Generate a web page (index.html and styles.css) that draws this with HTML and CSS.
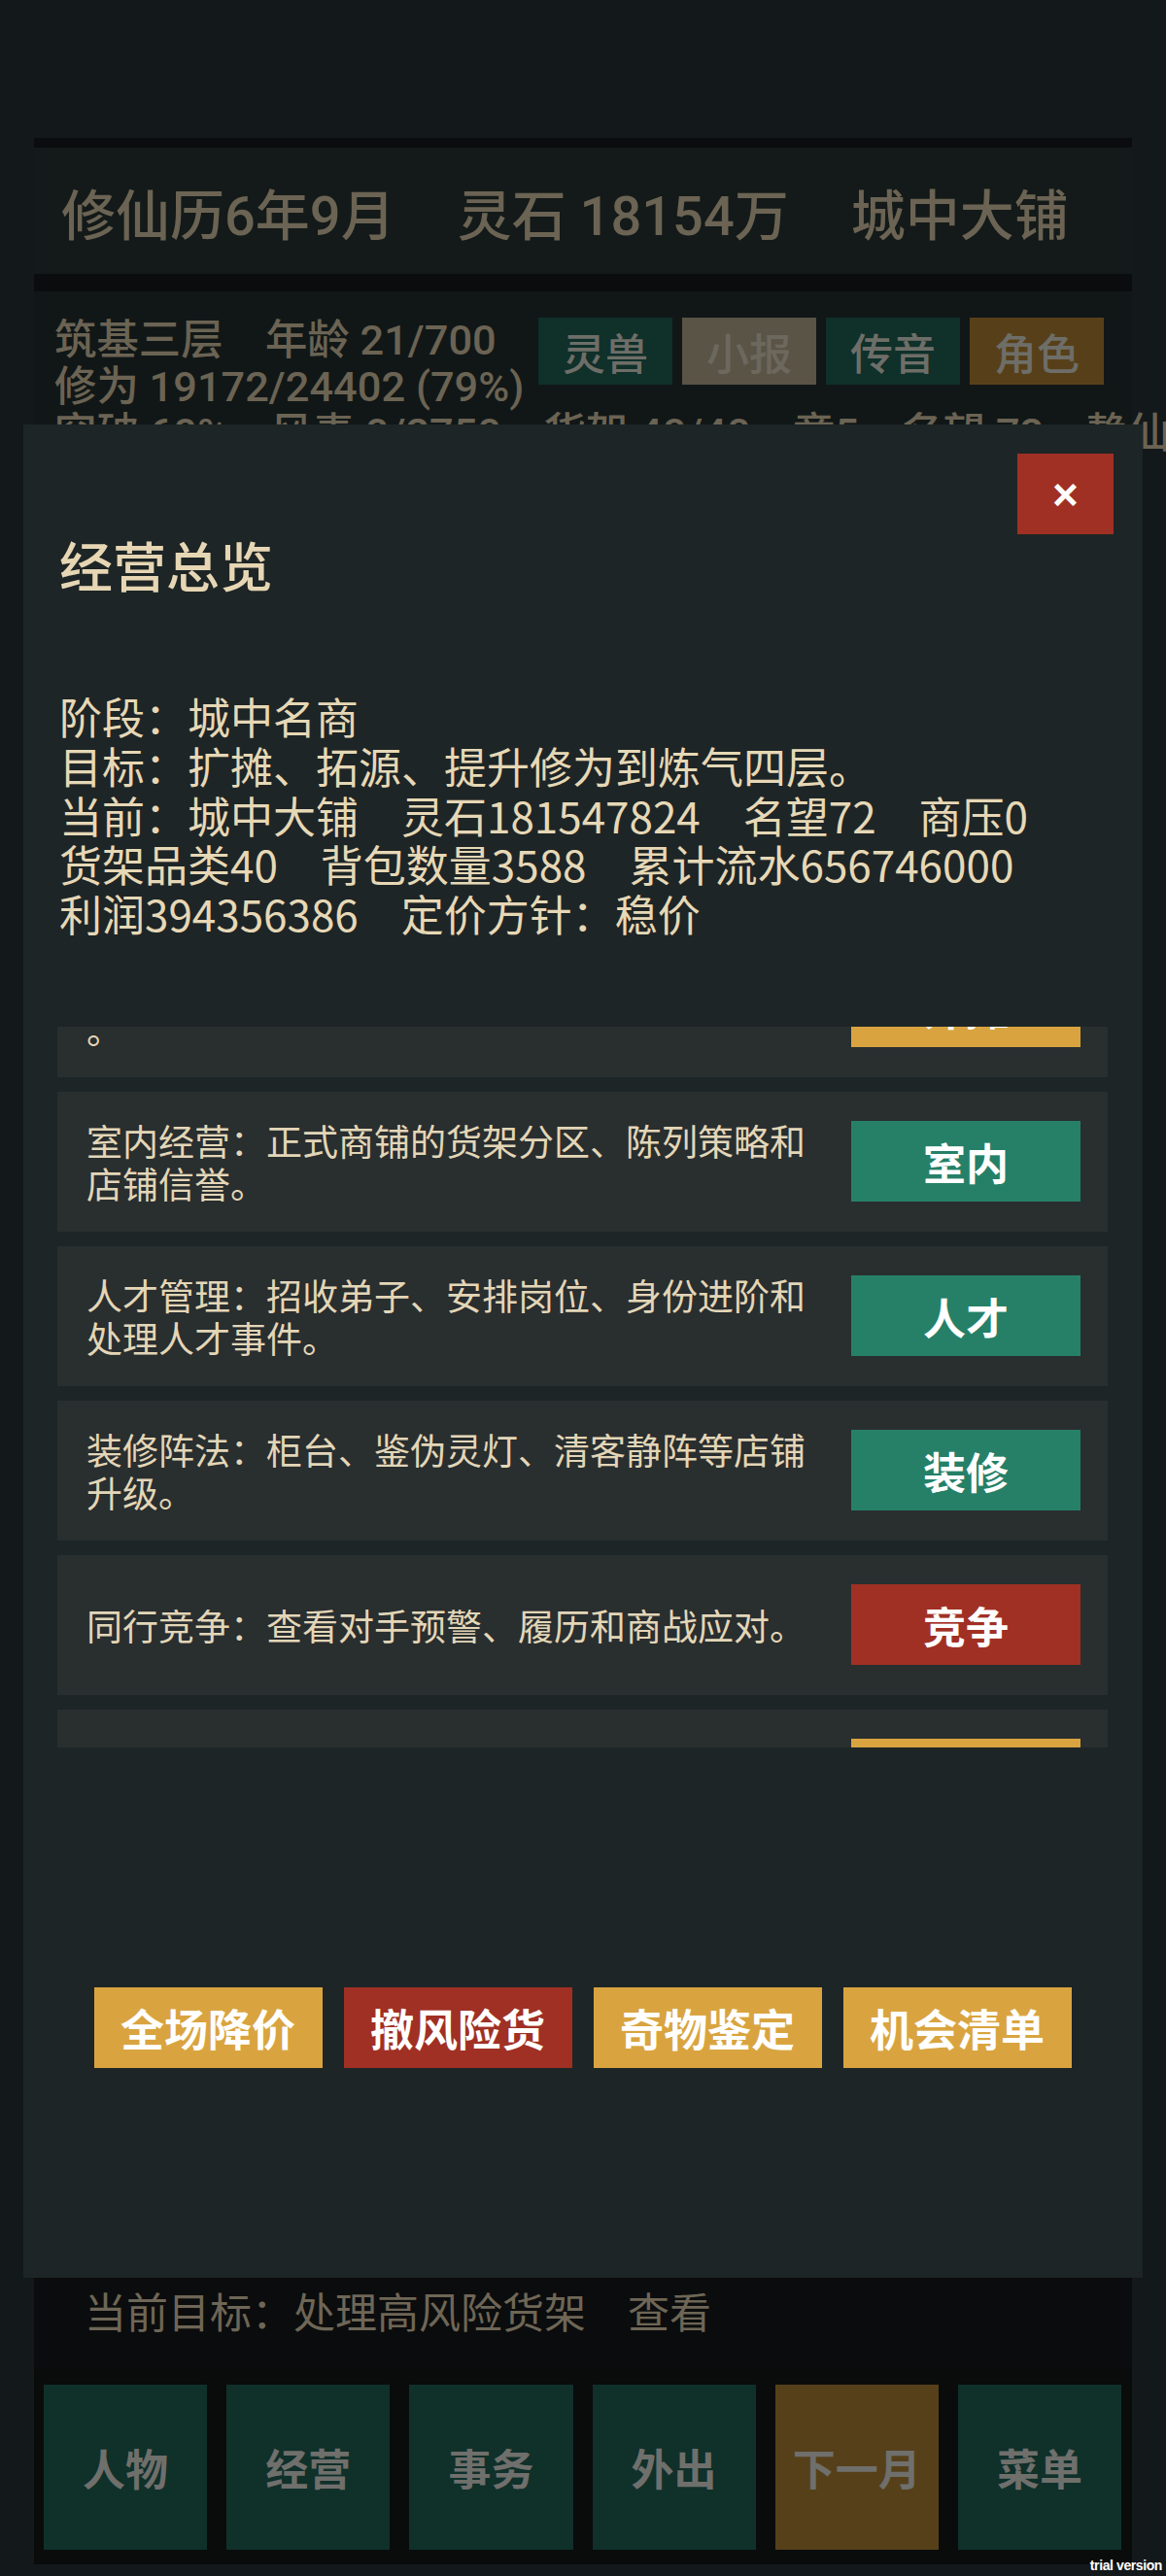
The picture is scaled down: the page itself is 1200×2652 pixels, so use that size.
FILE: index.html
```html
<!DOCTYPE html>
<html lang="zh-CN">
<head>
    <meta charset="UTF-8">
    <meta name="viewport" content="width=device-width, initial-scale=1.0">
    <title>经营总览</title>
    <link rel="stylesheet" href="styles.css">
</head>
<body>
    <div class="app">
        <header class="top-bar">
            <span>修仙历6年9月</span>
            <span>灵石 18154万</span>
            <span>城中大铺</span>
        </header>

        <section class="status">
            <div class="status-row">
                <div class="status-lines">
                    <p>筑基三层　年龄 21/700</p>
                    <p>修为 19172/24402 (79%)</p>
                </div>
                <div class="quick-btns">
                    <button class="qb teal">灵兽</button>
                    <button class="qb gray">小报</button>
                    <button class="qb teal">传音</button>
                    <button class="qb brown">角色</button>
                </div>
            </div>
            <p class="status-extra">突破 60%　风毒 0/2750　货架 40/40　章5　名望 72　静仙</p>
        </section>

        <div class="goal-bar">当前目标：处理高风险货架　查看</div>

        <nav class="bottom-nav">
            <button class="nav-btn">人物</button>
            <button class="nav-btn">经营</button>
            <button class="nav-btn">事务</button>
            <button class="nav-btn">外出</button>
            <button class="nav-btn next">下一月</button>
            <button class="nav-btn">菜单</button>
        </nav>
    </div>

    <div class="modal">
        <button class="close-btn">×</button>
        <h2 class="modal-title">经营总览</h2>
        <div class="overview">
            <p>阶段：城中名商</p>
            <p>目标：扩摊、拓源、提升修为到炼气四层。</p>
            <p>当前：城中大铺　灵石181547824　名望72　商压0</p>
            <p>货架品类40　背包数量3588　累计流水656746000</p>
            <p>利润394356386　定价方针：稳价</p>
        </div>

        <div class="biz-list">
            <div class="biz-track">
                <div class="biz-item">
                    <p class="biz-text">外摊经营：集市摊位的摆放、吆喝和议价技巧<br>。</p>
                    <button class="biz-btn yellow">外摊</button>
                </div>
                <div class="biz-item">
                    <p class="biz-text">室内经营：正式商铺的货架分区、陈列策略和店铺信誉。</p>
                    <button class="biz-btn teal">室内</button>
                </div>
                <div class="biz-item">
                    <p class="biz-text">人才管理：招收弟子、安排岗位、身份进阶和处理人才事件。</p>
                    <button class="biz-btn teal">人才</button>
                </div>
                <div class="biz-item">
                    <p class="biz-text">装修阵法：柜台、鉴伪灵灯、清客静阵等店铺升级。</p>
                    <button class="biz-btn teal">装修</button>
                </div>
                <div class="biz-item">
                    <p class="biz-text">同行竞争：查看对手预警、履历和商战应对。</p>
                    <button class="biz-btn red">竞争</button>
                </div>
                <div class="biz-item">
                    <p class="biz-text">商会往来：结交商会、承接委托和联合采购。</p>
                    <button class="biz-btn yellow">商会</button>
                </div>
            </div>
        </div>

        <div class="actions">
            <button class="act-btn yellow">全场降价</button>
            <button class="act-btn red">撤风险货</button>
            <button class="act-btn yellow">奇物鉴定</button>
            <button class="act-btn yellow">机会清单</button>
        </div>
    </div>

    <div class="watermark">trial version</div>
</body>
</html>
```

FILE: styles.css
```css
* {
    box-sizing: border-box;
}

body {
    margin: 0;
    background-color: #13181b;
    font-family: Roboto, "Noto Sans CJK SC", sans-serif;
    position: relative;
    min-height: 2652px;
}

p {
    margin: 0;
}

button {
    border: none;
    padding: 0;
    font-family: "Noto Sans CJK SC", sans-serif;
    cursor: pointer;
}

.app {
    width: 1130px;
    margin-left: 35px;
    padding-top: 142px;
}

/* top bar */
.top-bar {
    height: 140px;
    border-top: 10px solid #0a0c0d;
    background-color: #131a19;
    display: flex;
    align-items: center;
    gap: 64px;
    padding-left: 28px;
    font-size: 56px;
    font-weight: 500;
    color: #6b6353;
}

/* status panel, mostly hidden under the modal */
.status {
    height: 2063px;
    border-top: 18px solid #0a0c0d;
    background-color: #111717;
    padding: 27px 29px 0 21px;
    color: #6b6353;
    font-size: 43.4px;
    font-weight: 500;
    line-height: 48px;
}

.status-row {
    display: flex;
    justify-content: space-between;
}

.quick-btns {
    display: flex;
    gap: 10px;
}

.qb {
    width: 138px;
    height: 69px;
    font-size: 44px;
    font-weight: 500;
    color: #6e6e68;
}

.qb.teal {
    background-color: #10302a;
}

.qb.gray {
    background-color: #5a5446;
    color: #6c685e;
}

.qb.brown {
    background-color: #574019;
}

.status-extra {
    white-space: nowrap;
}

/* goal + bottom nav */
.goal-bar {
    height: 94px;
    background-color: #0b0c0d;
    padding: 8px 0 0 52px;
    font-family: "Noto Sans CJK SC", sans-serif;
    font-size: 43px;
    line-height: 50px;
    color: #6e6656;
}

.bottom-nav {
    height: 201px;
    background-color: #0a0b0b;
    padding: 16px 11px 15px 10px;
    display: flex;
    gap: 20px;
}

.nav-btn {
    flex: 1;
    height: 170px;
    background-color: #10302a;
    color: #6f6f6c;
    font-size: 44px;
    font-weight: bold;
}

.nav-btn.next {
    background-color: #56401a;
}

/* modal */
.modal {
    position: absolute;
    top: 437px;
    left: 24px;
    width: 1152px;
    height: 1908px;
    background-color: #1e2526;
    padding: 0 36px 0 35px;
    display: flex;
    flex-direction: column;
    font-family: "Noto Sans CJK SC", sans-serif;
    color: #e6d8b6;
}

.close-btn {
    align-self: flex-end;
    margin: 30px -6px 0 0;
    width: 99px;
    height: 83px;
    background-color: #a03024;
    color: white;
    font-family: "Liberation Sans", sans-serif;
    font-size: 46px;
    font-weight: bold;
}

.modal-title {
    margin: -3px 0 0;
    padding-left: 2px;
    font-size: 55px;
    line-height: 66px;
    font-weight: 500;
    color: #e6d6b4;
}

.overview {
    margin-top: 99px;
    padding-left: 2px;
    font-size: 44px;
    line-height: 50.8px;
}

.biz-list {
    margin-top: 91px;
    height: 742px;
    overflow: hidden;
}

.biz-track {
    margin-top: -92px;
    display: flex;
    flex-direction: column;
    gap: 15px;
}

.biz-item {
    height: 144px;
    flex-shrink: 0;
    background-color: #292e2f;
    display: flex;
    align-items: center;
    gap: 40px;
    padding: 0 28px 0 30px;
}

.biz-text {
    flex: 1;
    font-size: 37px;
    line-height: 44px;
    color: #e3d6b7;
}

.biz-btn {
    width: 236px;
    height: 83px;
    flex-shrink: 0;
    color: white;
    font-size: 44px;
    font-weight: bold;
}

.teal {
    background-color: #268068;
}

.red {
    background-color: #a03024;
}

.yellow {
    background-color: #d9a440;
}

.actions {
    margin-top: 247px;
    display: flex;
    justify-content: center;
    gap: 22px;
}

.act-btn {
    width: 235px;
    height: 83px;
    color: white;
    font-size: 45px;
    font-weight: bold;
}

.watermark {
    position: absolute;
    right: 4px;
    bottom: 3px;
    font-family: "Liberation Sans Narrow", "Liberation Sans", sans-serif;
    font-size: 14px;
    font-weight: bold;
    letter-spacing: -0.4px;
    color: white;
}
```
